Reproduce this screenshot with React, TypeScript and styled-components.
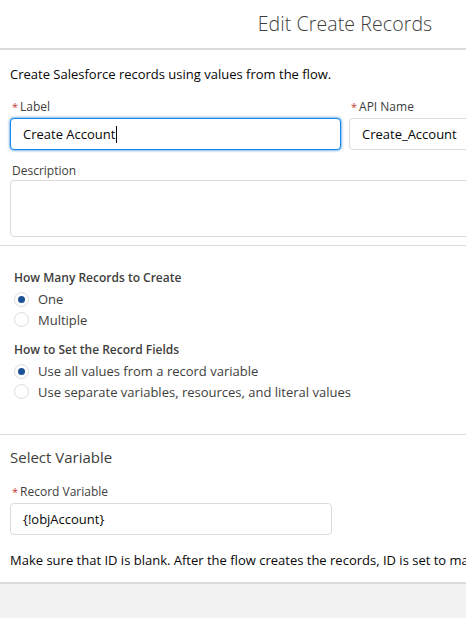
import React from 'react'
import styled, { createGlobalStyle } from 'styled-components'

const GlobalStyle = createGlobalStyle`
  html, body {
    margin: 0;
    padding: 0;
    background: #f3f2f2;
    overflow: hidden;
  }
  body {
    font-family: 'Open Sans', 'Noto Sans', sans-serif;
    color: #080707;
  }
`

const Modal = styled.div`
  width: 690px;
  height: 618px;
  display: flex;
  flex-direction: column;
`

const ModalHeader = styled.header`
  height: 50px;
  background: #ffffff;
  border-bottom: 2px solid #dddbda;
  display: flex;
  align-items: center;
  justify-content: center;
  box-sizing: border-box;
`

const ModalTitle = styled.h2`
  margin: 0 0 2px;
  font-size: 19.5px;
  font-weight: 300;
  color: #3e3e3c;
  letter-spacing: 0.1px;
`

const ModalContent = styled.div`
  background: #ffffff;
  border-bottom: 2px solid #dddbda;
`

const Section = styled.section<{ divider?: boolean }>`
  padding: 0 10px;
  border-bottom: ${({ divider }) => (divider ? '1px solid #dddbda' : 'none')};
`

const Intro = styled.p`
  margin: 0;
  padding: 15px 0 15px;
  font-size: 13px;
  color: #080707;
`

const FieldRow = styled.div`
  display: grid;
  grid-template-columns: 1fr 1fr;
  column-gap: 8px;
`

const Field = styled.div`
  display: flex;
  flex-direction: column;
  margin-bottom: 8px;
`

const Label = styled.label`
  font-size: 12px;
  color: #3e3e3c;
  padding: 0 2px 2px;
  line-height: 18px;
`

const Required = styled.abbr`
  color: #c23934;
  text-decoration: none;
  margin-right: 2px;
  font-size: 11px;
`

const Input = styled.div<{ focused?: boolean; width?: number }>`
  box-sizing: border-box;
  height: 32px;
  width: ${({ width }) => (width ? `${width}px` : 'auto')};
  border: 1px solid ${({ focused }) => (focused ? '#1589ee' : '#dddbda')};
  box-shadow: ${({ focused }) => (focused ? '0 0 3px #0070d2' : 'none')};
  border-radius: 4px;
  padding: 0 12px;
  display: flex;
  align-items: center;
  font-size: 13px;
  color: #080707;
  background: #ffffff;
`

const Caret = styled.span`
  display: inline-block;
  width: 1px;
  height: 17px;
  background: #080707;
  margin-left: 1px;
`

const TextArea = styled.div`
  box-sizing: border-box;
  height: 57px;
  border: 1px solid #dddbda;
  border-radius: 4px;
  margin-bottom: 8px;
`

const OptionsBlock = styled.div`
  padding: 23px 4px 32px;
`

const Legend = styled.div`
  font-size: 12px;
  font-weight: 600;
  color: #3e3e3c;
  line-height: 18px;
  margin-bottom: 2px;
`

const RadioGroup = styled.div`
  display: flex;
  flex-direction: column;
  margin-bottom: 11px;
  &:last-child {
    margin-bottom: 0;
  }
`

const RadioOption = styled.label`
  display: flex;
  align-items: center;
  gap: 9px;
  height: 20.5px;
  font-size: 13px;
  color: #3e3e3c;
`

const RadioMark = styled.span<{ checked?: boolean }>`
  box-sizing: border-box;
  width: 15px;
  height: 15px;
  border-radius: 50%;
  border: 1px solid #dddbda;
  background: #ffffff;
  display: flex;
  align-items: center;
  justify-content: center;
  &:after {
    content: '';
    display: ${({ checked }) => (checked ? 'block' : 'none')};
    width: 7px;
    height: 7px;
    border-radius: 50%;
    background: #1b5297;
  }
`

const SectionTitle = styled.h3`
  margin: 0;
  padding: 12px 0 16px;
  font-size: 15px;
  font-weight: 400;
  color: #3e3e3c;
`

const HelpText = styled.p`
  margin: 0;
  padding: 8px 0 13px;
  font-size: 13px;
  color: #080707;
  white-space: nowrap;
`

const Footer = styled.div`
  flex: 1;
  background: #f3f2f2;
`

interface RadioProps {
  label: string
  checked?: boolean
}

const Radio: React.FC<RadioProps> = ({ label, checked }) => (
  <RadioOption>
    <RadioMark checked={checked} />
    {label}
  </RadioOption>
)

const App: React.FC = () => (
  <>
    <GlobalStyle />
    <Modal>
      <ModalHeader>
        <ModalTitle>Edit Create Records</ModalTitle>
      </ModalHeader>
      <ModalContent>
        <Section divider>
          <Intro>Create Salesforce records using values from the flow.</Intro>
          <FieldRow>
            <Field>
              <Label><Required>*</Required>Label</Label>
              <Input focused>Create Account<Caret /></Input>
            </Field>
            <Field>
              <Label><Required>*</Required>API Name</Label>
              <Input>Create_Account</Input>
            </Field>
          </FieldRow>
          <Label>Description</Label>
          <TextArea />
        </Section>

        <Section divider>
          <OptionsBlock>
            <RadioGroup>
              <Legend>How Many Records to Create</Legend>
              <Radio label="One" checked />
              <Radio label="Multiple" />
            </RadioGroup>
            <RadioGroup>
              <Legend>How to Set the Record Fields</Legend>
              <Radio label="Use all values from a record variable" checked />
              <Radio label="Use separate variables, resources, and literal values" />
            </RadioGroup>
          </OptionsBlock>
        </Section>

        <Section>
          <SectionTitle>Select Variable</SectionTitle>
          <Field>
            <Label><Required>*</Required>Record Variable</Label>
            <Input width={322}>{'{!objAccount}'}</Input>
          </Field>
          <HelpText>
            Make sure that ID is blank. After the flow creates the records, ID is set to match the new record IDs.
          </HelpText>
        </Section>
      </ModalContent>
      <Footer />
    </Modal>
  </>
)

export default App
